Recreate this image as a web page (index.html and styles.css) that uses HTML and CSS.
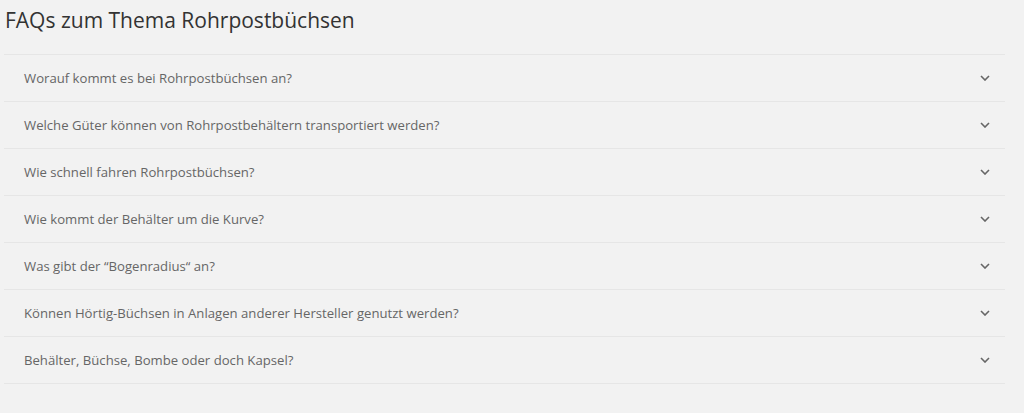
FILE: index.html
```html
<!DOCTYPE html>
<html lang="de">
<head>
<meta charset="utf-8">
<link rel="stylesheet" href="styles.css">
</head>
<body>
<section class="faq">
  <h2 class="faq-title">FAQs zum Thema Rohrpostbüchsen</h2>
  <div class="faq-list">
    <div class="faq-item"><span class="faq-q">Worauf kommt es bei Rohrpostbüchsen an?</span><svg class="chev" viewBox="0 0 10 6" width="10" height="6"><path d="M1 1l4 4 4-4" fill="none" stroke="#666" stroke-width="1.6"/></svg></div>
    <div class="faq-item"><span class="faq-q">Welche Güter können von Rohrpostbehältern transportiert werden?</span><svg class="chev" viewBox="0 0 10 6" width="10" height="6"><path d="M1 1l4 4 4-4" fill="none" stroke="#666" stroke-width="1.6"/></svg></div>
    <div class="faq-item"><span class="faq-q">Wie schnell fahren Rohrpostbüchsen?</span><svg class="chev" viewBox="0 0 10 6" width="10" height="6"><path d="M1 1l4 4 4-4" fill="none" stroke="#666" stroke-width="1.6"/></svg></div>
    <div class="faq-item"><span class="faq-q">Wie kommt der Behälter um die Kurve?</span><svg class="chev" viewBox="0 0 10 6" width="10" height="6"><path d="M1 1l4 4 4-4" fill="none" stroke="#666" stroke-width="1.6"/></svg></div>
    <div class="faq-item"><span class="faq-q">Was gibt der “Bogenradius“ an?</span><svg class="chev" viewBox="0 0 10 6" width="10" height="6"><path d="M1 1l4 4 4-4" fill="none" stroke="#666" stroke-width="1.6"/></svg></div>
    <div class="faq-item"><span class="faq-q">Können Hörtig-Büchsen in Anlagen anderer Hersteller genutzt werden?</span><svg class="chev" viewBox="0 0 10 6" width="10" height="6"><path d="M1 1l4 4 4-4" fill="none" stroke="#666" stroke-width="1.6"/></svg></div>
    <div class="faq-item"><span class="faq-q">Behälter, Büchse, Bombe oder doch Kapsel?</span><svg class="chev" viewBox="0 0 10 6" width="10" height="6"><path d="M1 1l4 4 4-4" fill="none" stroke="#666" stroke-width="1.6"/></svg></div>
  </div>
</section>
</body>
</html>
```
FILE: styles.css
```css
html, body {
  margin: 0;
  padding: 0;
  background: #f2f2f2;
}
body {
  font-family: "Open Sans", "Noto Sans", sans-serif;
}
.faq {
  padding: 0 19px 0 4px;
}
.faq-title {
  margin: 0;
  padding: 6px 0 0 1px;
  height: 54px;
  box-sizing: border-box;
  font-size: 21px;
  font-weight: 400;
  line-height: 28px;
  color: #333;
}
.faq-list {
  border-top: 1px solid #e6e6e6;
}
.faq-item {
  display: flex;
  align-items: center;
  justify-content: space-between;
  height: 46px;
  padding: 0 15px 0 20px;
  border-bottom: 1px solid #e6e6e6;
  font-size: 13.15px;
  color: #666;
}
.chev {
  display: block;
}
```
